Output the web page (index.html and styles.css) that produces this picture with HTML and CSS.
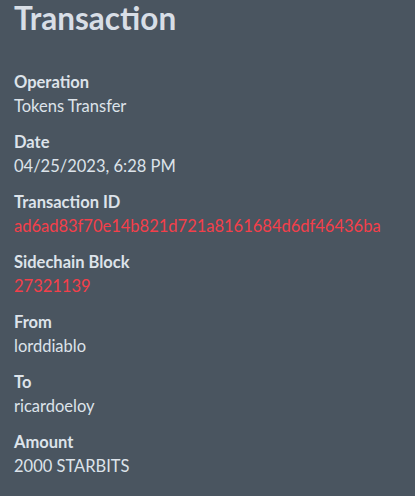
FILE: index.html
```html
<!DOCTYPE html>
<html>
<head>
<meta charset="utf-8">
<link rel="stylesheet" href="styles.css">
</head>
<body>
<div class="page">
  <h1 class="title">Transaction</h1>
  <dl class="fields">
    <div class="field"><dt>Operation</dt><dd>Tokens Transfer</dd></div>
    <div class="field"><dt>Date</dt><dd>04/25/2023, 6:28 PM</dd></div>
    <div class="field"><dt>Transaction ID</dt><dd class="link">ad6ad83f70e14b821d721a8161684d6df46436ba</dd></div>
    <div class="field"><dt>Sidechain Block</dt><dd class="link">27321139</dd></div>
    <div class="field"><dt>From</dt><dd>lorddiablo</dd></div>
    <div class="field"><dt>To</dt><dd>ricardoeloy</dd></div>
    <div class="field"><dt>Amount</dt><dd>2000 STARBITS</dd></div>
  </dl>
</div>
</body>
</html>
```
FILE: styles.css
```css
html, body {
  margin: 0;
  padding: 0;
  background: #4a5560;
}
body {
  font-family: Lato, "Noto Sans", sans-serif;
  color: #dde3ea;
  height: 496px;
  overflow: hidden;
}
.page {
  padding: 0 14px;
}
.title {
  margin: 0;
  font-size: 31.5px;
  line-height: 36px;
  font-weight: 700;
  color: #d8dee6;
}
.fields {
  margin: 34px 0 0 0;
  display: flex;
  flex-direction: column;
  gap: 12px;
}
.field dt {
  font-weight: 700;
  font-size: 16.5px;
  line-height: 24px;
}
.field dd {
  margin: 0;
  font-size: 16.5px;
  line-height: 24px;
}
.field dd.link {
  color: #f43f4a;
}
```
